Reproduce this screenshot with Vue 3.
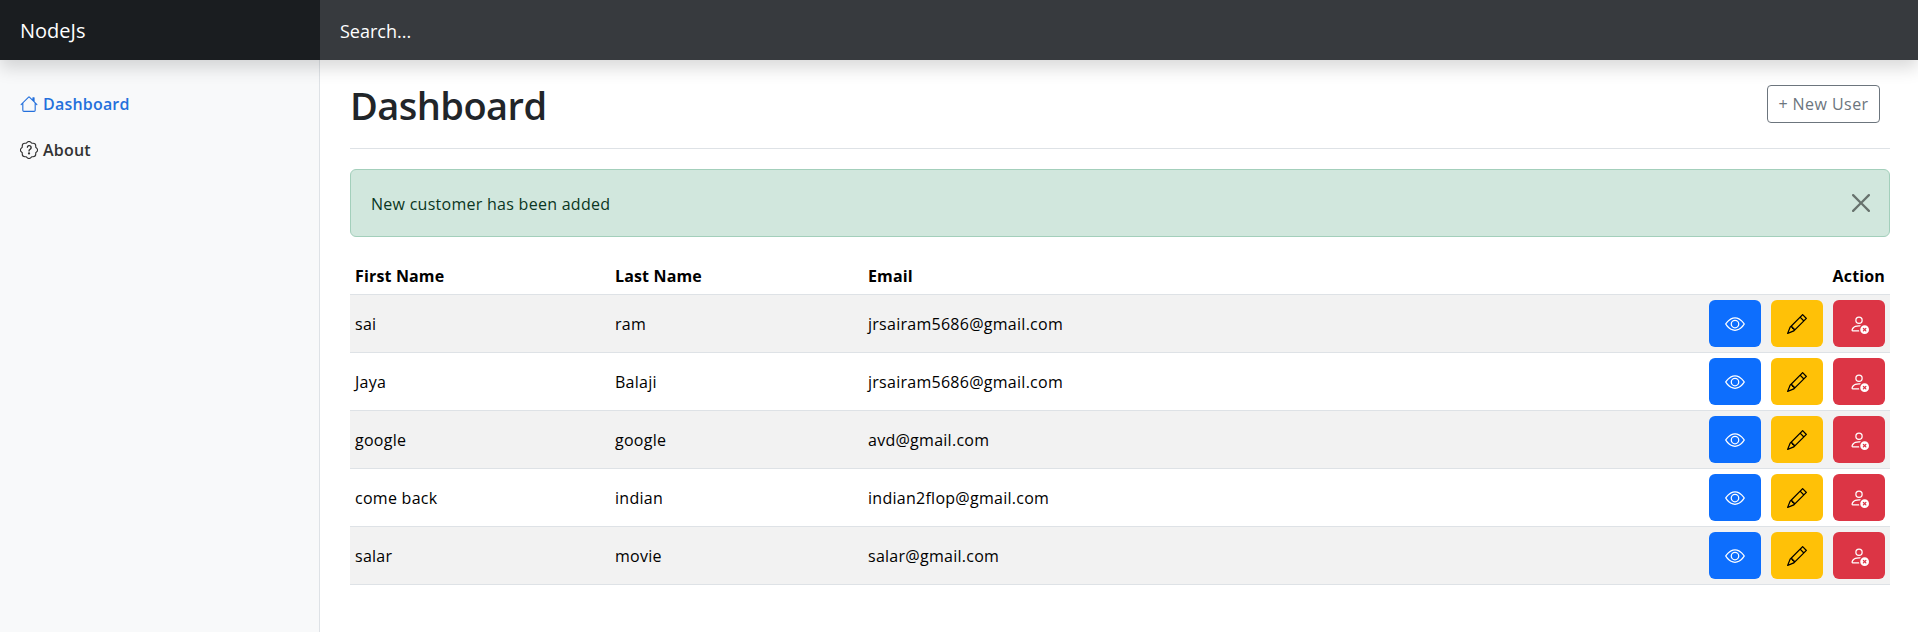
<script setup>
const rows = [
  ['sai', 'ram', 'jrsairam5686@gmail.com'],
  ['Jaya', 'Balaji', 'jrsairam5686@gmail.com'],
  ['google', 'google', 'avd@gmail.com'],
  ['come back', 'indian', 'indian2flop@gmail.com'],
  ['salar', 'movie', 'salar@gmail.com'],
]
</script>

<template>
  <div class="page">
    <header class="topbar">
      <a class="brand">NodeJs</a>
      <div class="search">Search...</div>
    </header>
    <div class="body">
      <aside class="sidebar">
        <a class="nav-link active">
          <svg viewBox="0 0 16 16" width="18" height="18" fill="currentColor"><path d="M8.707 1.5a1 1 0 0 0-1.414 0L.646 8.146a.5.5 0 0 0 .708.708L2 8.207V13.5A1.5 1.5 0 0 0 3.5 15h9a1.5 1.5 0 0 0 1.5-1.5V8.207l.646.647a.5.5 0 0 0 .708-.708L13 5.793V2.5a.5.5 0 0 0-.5-.5h-1a.5.5 0 0 0-.5.5v1.293L8.707 1.5ZM13 7.207V13.5a.5.5 0 0 1-.5.5h-9a.5.5 0 0 1-.5-.5V7.207l5-5 5 5Z"/></svg>
          <span>Dashboard</span>
        </a>
        <a class="nav-link">
          <svg viewBox="0 0 16 16" width="18" height="18" fill="currentColor"><path d="M8.05 9.6c.336 0 .504-.24.554-.627.04-.534.198-.815.847-1.26.673-.475 1.049-1.09 1.049-1.986 0-1.325-.92-2.227-2.262-2.227-1.02 0-1.792.492-2.1 1.29A1.71 1.71 0 0 0 6 5.48c0 .393.203.64.545.64.272 0 .455-.147.564-.51.158-.592.525-.915 1.074-.915.61 0 1.03.446 1.03 1.084 0 .563-.208.885-.822 1.325-.619.433-.926.914-.926 1.64v.111c0 .428.208.745.585.745z"/><path d="m10.273 2.513-.921-.944.715-.698.622.637.89-.011a2.89 2.89 0 0 1 2.924 2.924l-.01.89.636.622a2.89 2.89 0 0 1 0 4.134l-.637.622.011.89a2.89 2.89 0 0 1-2.924 2.924l-.89-.01-.622.636a2.89 2.89 0 0 1-4.134 0l-.622-.637-.89.011a2.89 2.89 0 0 1-2.924-2.924l.01-.89-.636-.622a2.89 2.89 0 0 1 0-4.134l.637-.622-.011-.89a2.89 2.89 0 0 1 2.924-2.924l.89.01.622-.636a2.89 2.89 0 0 1 4.134 0l-.715.698a1.89 1.89 0 0 0-2.704 0l-.92.944-1.32-.016a1.89 1.89 0 0 0-1.911 1.912l.016 1.318-.944.921a1.89 1.89 0 0 0 0 2.704l.944.92-.016 1.32a1.89 1.89 0 0 0 1.912 1.911l1.318-.016.921.944a1.89 1.89 0 0 0 2.704 0l.92-.944 1.32.016a1.89 1.89 0 0 0 1.911-1.912l-.016-1.318.944-.921a1.89 1.89 0 0 0 0-2.704l-.944-.92.016-1.32a1.89 1.89 0 0 0-1.912-1.911l-1.318.016z"/><path d="M7.002 11a1 1 0 1 1 2 0 1 1 0 0 1-2 0z"/></svg>
          <span>About</span>
        </a>
      </aside>
      <main class="main">
        <div class="head">
          <h1>Dashboard</h1>
          <a class="new-user">+ New User</a>
        </div>
        <div class="alert">
          <span class="alert-text">New customer has been added</span>
          <svg class="close" viewBox="0 0 16 16" width="18" height="18" fill="#000"><path d="M.293.293a1 1 0 0 1 1.414 0L8 6.586 14.293.293a1 1 0 1 1 1.414 1.414L9.414 8l6.293 6.293a1 1 0 0 1-1.414 1.414L8 9.414l-6.293 6.293a1 1 0 0 1-1.414-1.414L6.586 8 .293 1.707a1 1 0 0 1 0-1.414z"/></svg>
        </div>
        <table class="table">
          <thead>
            <tr>
              <th class="c1">First Name</th>
              <th class="c2">Last Name</th>
              <th>Email</th>
              <th class="right">Action</th>
            </tr>
          </thead>
          <tbody>
            <tr v-for="r in rows" :key="r[0]">
              <td>{{ r[0] }}</td>
              <td>{{ r[1] }}</td>
              <td>{{ r[2] }}</td>
              <td class="actions">
                <div class="btns">
                  <a class="btn blue">
                    <svg viewBox="0 0 16 16" width="20" height="20" fill="currentColor"><path d="M16 8s-3-5.5-8-5.5S0 8 0 8s3 5.5 8 5.5S16 8 16 8zM1.173 8a13.133 13.133 0 0 1 1.66-2.043C4.12 4.668 5.88 3.5 8 3.5c2.12 0 3.879 1.168 5.168 2.457A13.133 13.133 0 0 1 14.828 8c-.058.087-.122.183-.195.288-.335.48-.83 1.12-1.465 1.755C11.879 11.332 10.119 12.5 8 12.5c-2.12 0-3.879-1.168-5.168-2.457A13.134 13.134 0 0 1 1.172 8z"/><path d="M8 5.5a2.5 2.5 0 1 0 0 5 2.5 2.5 0 0 0 0-5zM4.5 8a3.5 3.5 0 1 1 7 0 3.5 3.5 0 0 1-7 0z"/></svg>
                  </a>
                  <a class="btn yellow">
                    <svg viewBox="0 0 16 16" width="20" height="20" fill="currentColor"><path d="M12.146.146a.5.5 0 0 1 .708 0l3 3a.5.5 0 0 1 0 .708l-10 10a.5.5 0 0 1-.168.11l-5 2a.5.5 0 0 1-.65-.65l2-5a.5.5 0 0 1 .11-.168l10-10zM11.207 2.5 13.5 4.793 14.793 3.5 12.5 1.207 11.207 2.5zm1.586 3L10.5 3.207 4 9.707V10h.5a.5.5 0 0 1 .5.5v.5h.5a.5.5 0 0 1 .5.5v.5h.293l6.5-6.5zm-9.761 5.175-.106.106-1.528 3.821 3.821-1.528.106-.106A.5.5 0 0 1 5 12.5V12h-.5a.5.5 0 0 1-.5-.5V11h-.5a.5.5 0 0 1-.468-.325z"/></svg>
                  </a>
                  <a class="btn red">
                    <svg viewBox="0 0 16 16" width="20" height="20" fill="currentColor"><path d="M11 5a3 3 0 1 1-6 0 3 3 0 0 1 6 0ZM8 7a2 2 0 1 0 0-4 2 2 0 0 0 0 4Zm.256 7a4.474 4.474 0 0 1-.229-1.004H3c.001-.246.154-.986.832-1.664C4.484 10.68 5.711 10 8 10c.26 0 .507.009.74.025.226-.341.496-.65.804-.918C9.077 9.038 8.564 9 8 9c-5 0-6 3-6 4s1 1 1 1h5.256Z"/><path d="M12.5 16a3.5 3.5 0 1 0 0-7 3.5 3.5 0 0 0 0 7Zm-.646-4.854.646.647.646-.647a.5.5 0 0 1 .708.708l-.647.646.647.646a.5.5 0 0 1-.708.708l-.646-.647-.646.647a.5.5 0 0 1-.708-.708l.647-.646-.647-.646a.5.5 0 0 1 .708-.708Z"/></svg>
                  </a>
                </div>
              </td>
            </tr>
          </tbody>
        </table>
      </main>
    </div>
  </div>
</template>

<style scoped>
.page {
  height: 632px;
  display: flex;
  flex-direction: column;
  overflow: hidden;
  font-family: "Open Sans", "Noto Sans", sans-serif;
  font-size: 16px;
  line-height: 24px;
  color: #212529;
}
.topbar {
  height: 60px;
  flex: none;
  display: flex;
  align-items: stretch;
  background: #212529;
  color: #fff;
  position: relative;
  z-index: 2;
  box-shadow: 0 8px 16px rgba(0, 0, 0, 0.15);
}
.brand {
  width: 320px;
  padding: 1px 20px 0;
  box-sizing: border-box;
  background: #1a1d20;
  line-height: 60px;
  font-size: 20px;
}
.search {
  flex: 1;
  background: #373a3e;
  padding: 1px 20px 0;
  line-height: 60px;
  font-size: 18px;
}
.body {
  flex: 1;
  display: flex;
  min-height: 0;
}
.sidebar {
  width: 320px;
  flex: none;
  box-sizing: border-box;
  background: #f8f9fa;
  border-right: 1px solid #dee2e6;
  padding-top: 21px;
}
.nav-link {
  display: flex;
  align-items: center;
  gap: 5px;
  height: 46px;
  padding-left: 20px;
  font-weight: 600;
  letter-spacing: 0.2px;
  color: #333;
}
.nav-link.active {
  color: #2470dc;
}
.main {
  flex: 1;
  padding: 0 28px 0 30px;
  min-width: 0;
}
.head {
  height: 88px;
  display: flex;
  justify-content: space-between;
  border-bottom: 1px solid #dee2e6;
  margin-bottom: 20px;
}
h1 {
  margin: 21px 0 0;
  font-size: 38px;
  line-height: 48px;
  font-weight: 600;
  letter-spacing: -0.55px;
}
.new-user {
  margin: 25px 10px 0 0;
  width: 113px;
  height: 38px;
  box-sizing: border-box;
  border: 1px solid #6c757d;
  border-radius: 4px;
  color: #6c757d;
  text-align: center;
  line-height: 37px;
  letter-spacing: 0.45px;
}
.alert {
  height: 68px;
  box-sizing: border-box;
  display: flex;
  align-items: center;
  justify-content: space-between;
  padding: 0 19px 0 20px;
  background: #d1e7dd;
  border: 1px solid #a3cfbb;
  border-radius: 6px;
  color: #0a3622;
  margin-bottom: 16px;
}
.alert-text {
  padding-top: 2px;
  letter-spacing: 0.27px;
}
.close {
  opacity: 0.5;
}
.table {
  width: 100%;
  border-collapse: separate;
  border-spacing: 0;
  table-layout: fixed;
  color: #000;
  letter-spacing: 0.27px;
}
.c1 { width: 260px; }
.c2 { width: 253px; }
th {
  box-sizing: border-box;
  padding: 11px 5px 6px;
  text-align: left;
  font-weight: 700;
  letter-spacing: 0.15px;
  border-bottom: 1px solid #dee2e6;
}
th.right {
  text-align: right;
  width: 200px;
}
td {
  padding: 5px;
  border-bottom: 1px solid #dee2e6;
}
tbody tr:nth-child(odd) td {
  background: #f2f2f2;
}
.btns {
  display: flex;
  justify-content: flex-end;
  gap: 10px;
}
.btn {
  width: 52px;
  height: 47px;
  border-radius: 6px;
  display: flex;
  align-items: center;
  justify-content: center;
}
.blue { background: #0d6efd; color: #fff; }
.yellow { background: #ffc107; color: #000; }
.red { background: #dc3545; color: #fff; }
</style>
